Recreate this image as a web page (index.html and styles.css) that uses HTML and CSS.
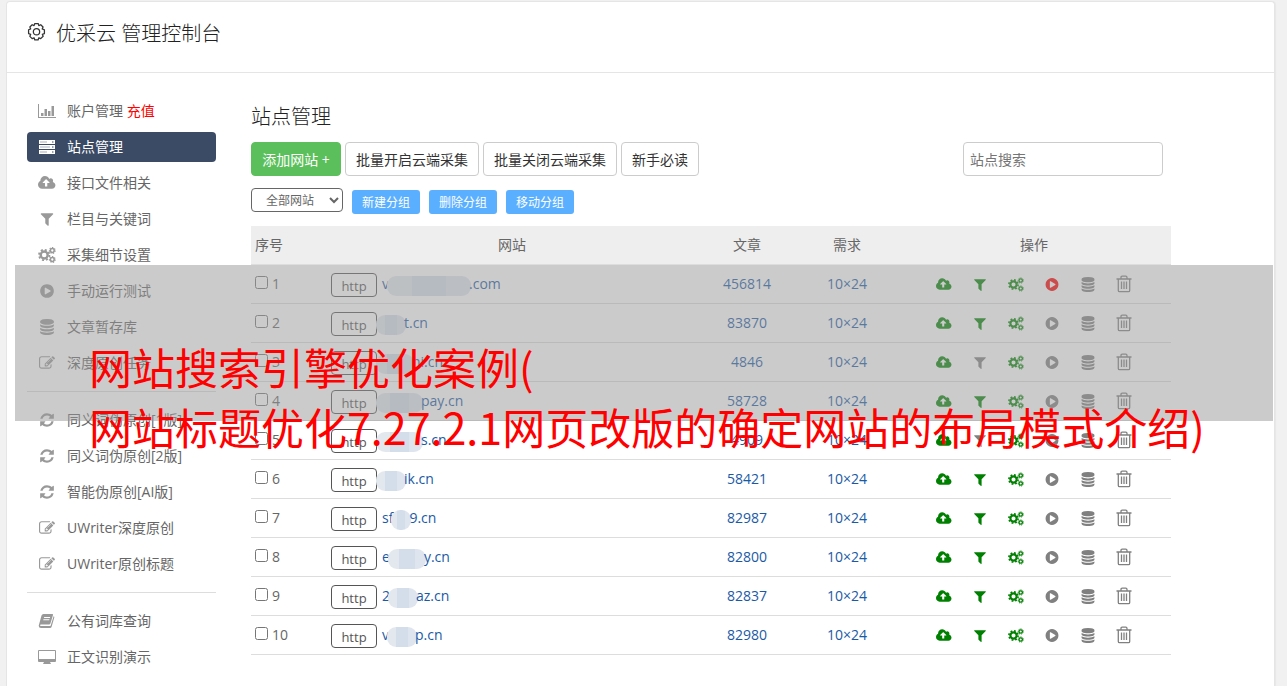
FILE: index.html
```html
<!DOCTYPE html>
<html lang="zh-CN">
<head>
  <meta charset="UTF-8">
  <title>优采云 管理控制台</title>
  <link rel="stylesheet" href="styles.css">
</head>
<body>

  <!-- icon set -->
  <svg class="sprite" aria-hidden="true">
    <symbol id="i-cog" viewBox="0 0 18 18"><path fill="none" stroke="currentColor" stroke-width="1.200" stroke-linejoin="round" d="M7.400 1h3.200l.6 1.900 1.800-.8 2.200 2.100-.8 1.900 2.100.8v3.600l-2 .7.8 1.900-2.300 2.200-1.800-.8-.7 2H7.400l-.7-2-1.800.8L2.700 13.100l.8-1.900-2-.7V6.900l2-.8-.8-1.900L4.900 2.100l1.800.8z"/><circle cx="9" cy="8.800" r="3" fill="none" stroke="currentColor" stroke-width="1.200"/></symbol>
    <symbol id="i-chart" viewBox="0 0 18 16"><path fill="currentColor" d="M0 1h1v13h17v1H0zM3 10h2.500v3H3zM6.500 6H9v7H6.500zM10 8h2.500v5H10zM13.500 3H16v10h-2.500z"/></symbol>
    <symbol id="i-server" viewBox="0 0 18 16"><path fill="currentColor" d="M1 1h16v4H1zM1 6h16v4H1zM1 11h16v4H1z"/><path fill="#3b4b66" fill-opacity=".45" d="M2 2.500h7v1H2zM2 7.500h10v1H2zM2 12.500h7v1H2z"/><path fill="#3b4b66" d="M14 2.500h1.500v1H14zM14 7.500h1.500v1H14zM14 12.500h1.500v1H14z"/></symbol>
    <symbol id="i-upload" viewBox="-64 64 1984 1664"><path fill="currentColor" d="M1216 864q0-14-9-23l-352-352q-9-9-23-9t-23 9l-351 351q-10 12-10 24 0 14 9 23t23 9h224v352q0 13 9.500 22.500t22.500 9.500h192q13 0 22.500-9.500t9.500-22.500v-352h224q13 0 22.500-9.500t9.500-22.500zm640 288q0 159-112.500 271.500t-271.500 112.500h-1088q-185 0-316.500-131.500t-131.500-316.500q0-130 70-240t188-165q-2-30-2-43 0-212 150-362t362-150q156 0 285.500 87t188.500 231q71-62 166-62 106 0 181 75t75 181q0 76-41 138 130 31 213.500 135.500t83.500 238.500z"/></symbol>
    <symbol id="i-filter" viewBox="0 0 1792 1792"><path fill="currentColor" d="M1595 295q17 41-14 70l-493 493v742q0 42-39 59-13 5-25 5-27 0-45-19l-256-256q-19-19-19-45v-486l-493-493q-31-29-14-70 17-39 59-39h1280q42 0 59 39z"/></symbol>
    <symbol id="i-cogs" viewBox="0 0 18 16"><g fill="none" stroke="currentColor"><circle cx="6.200" cy="8" r="3.500" stroke-width="2.400"/><circle cx="6.200" cy="8" r="5.200" stroke-width="1.800" stroke-dasharray="2.040 2.040"/><circle cx="14.300" cy="3.500" r="1.900" stroke-width="1.500"/><circle cx="14.300" cy="3.500" r="2.900" stroke-width="1.100" stroke-dasharray="1.300 1.300"/><circle cx="14.300" cy="12.500" r="1.900" stroke-width="1.500"/><circle cx="14.300" cy="12.500" r="2.900" stroke-width="1.100" stroke-dasharray="1.300 1.300"/></g></symbol>
    <symbol id="i-play" viewBox="0 0 1792 1792"><path fill="currentColor" d="M896 128q209 0 385.500 103t279.500 279.500 103 385.500-103 385.500-279.500 279.500-385.500 103-385.500-103-279.500-279.500-103-385.500 103-385.500 279.500-279.500 385.500-103zm384 823q32-18 32-55t-32-55l-544-320q-31-19-64-1-32 19-32 56v640q0 37 32 56 16 8 32 8 17 0 32-9z"/></symbol>
    <symbol id="i-database" viewBox="0 0 1792 1792"><path fill="currentColor" d="M896 768q237 0 443-43t325-127v170q0 69-103 128t-280 93.500-385 34.500-385-34.500-280-93.500-103-128v-170q119 84 325 127t443 43zm0 768q237 0 443-43t325-127v170q0 69-103 128t-280 93.500-385 34.500-385-34.500-280-93.500-103-128v-170q119 84 325 127t443 43zm0-384q237 0 443-43t325-127v170q0 69-103 128t-280 93.500-385 34.500-385-34.500-280-93.500-103-128v-170q119 84 325 127t443 43zm0-1152q208 0 385 34.500t280 93.500 103 128v128q0 69-103 128t-280 93.500-385 34.500-385-34.500-280-93.500-103-128v-128q0-69 103-128t280-93.500 385-34.500z"/></symbol>
    <symbol id="i-edit" viewBox="0 0 1792 1792"><path fill="currentColor" d="M888 1184l116-116-152-152-116 116v56h96v96h56zm440-720q-16-16-33 1l-350 350q-17 17-1 33t33-1l350-350q17-17 1-33zm80 594v190q0 119-84.500 203.500t-203.500 84.500h-832q-119 0-203.500-84.500t-84.500-203.500v-832q0-119 84.500-203.500t203.500-84.500h832q63 0 117 25 15 7 18 23 3 17-9 29l-49 49q-14 14-32 8-23-6-45-6h-832q-66 0-113 47t-47 113v832q0 66 47 113t113 47h832q66 0 113-47t47-113v-126q0-13 9-22l64-64q15-15 35-7t20 29zm-96-738l288 288-672 672h-288v-288zm444 132l-92 92-288-288 92-92q28-28 68-28t68 28l152 152q28 28 28 68t-28 68z"/></symbol>
    <symbol id="i-refresh" viewBox="0 0 1792 1792"><path fill="currentColor" d="M1639 1056q0 5-1 7-64 268-268 434.500t-478 166.500q-146 0-282.500-55t-243.500-157l-129 129q-19 19-45 19t-45-19-19-45v-448q0-26 19-45t45-19h448q26 0 45 19t19 45-19 45l-137 137q71 66 161 102t187 36q134 0 250-65t186-179q11-17 53-117 8-23 30-23h192q13 0 22.500 9.500t9.500 22.500zm25-800v448q0 26-19 45t-45 19h-448q-26 0-45-19t-19-45 19-45l138-138q-148-137-349-137-134 0-250 65t-186 179q-11 17-53 117-8 23-30 23h-199q-13 0-22.500-9.500t-9.500-22.500v-7q65-268 270-434.500t480-166.500q146 0 284 55.500t245 156.500l130-129q19-19 45-19t45 19 19 45z"/></symbol>
    <symbol id="i-book" viewBox="0 0 18 16"><path fill="currentColor" fill-rule="evenodd" d="M5.500 1h8.800q1 0 .7 1l-2.600 8.500q-.3 1-1.400 1H3q-1 0-1 .8t1 .8h8.800q.7 0 .9-.7l2.900-9.200q1 .4.700 1.300l-2.600 8.900q-.4 1.500-1.800 1.500H3q-2.200 0-2.300-2.200L3.500 2.500Q4 1 5.500 1zm.7 3-.3 1h6l.3-1zm-.7 2.300-.3 1h6l.3-1z"/></symbol>
    <symbol id="i-desktop" viewBox="0 0 18 16"><path fill="currentColor" fill-rule="evenodd" d="M1 1h16q1 0 1 1v10q0 1-1 1h-5l1 2H5l1-2H1q-1 0-1-1V2q0-1 1-1zm0 1v8h16V2z"/></symbol>
    <symbol id="i-trash" viewBox="0 0 16 18"><path fill="none" stroke="currentColor" stroke-width="1.300" d="M.5 4h15M5 4V2.500Q5 1.200 6.200 1.200h3.600Q11 1.200 11 2.500V4M2.300 4v11.500q0 1.200 1.200 1.200h9q1.200 0 1.200-1.200V4M5.500 6.500v7.500M8 6.500v7.500M10.500 6.500v7.500"/></symbol>
  </svg>

  <div class="panel">
    <header class="panel-head">
      <svg class="head-icon"><use href="#i-cog"/></svg>
      <h1>优采云 管理控制台</h1>
    </header>

    <div class="panel-body">
      <nav class="sidebar">
        <ul>
          <li><a href="#"><svg><use href="#i-chart"/></svg>账户管理 <em>充值</em></a></li>
          <li class="active"><a href="#"><svg><use href="#i-server"/></svg>站点管理</a></li>
          <li><a href="#"><svg><use href="#i-upload"/></svg>接口文件相关</a></li>
          <li><a href="#"><svg><use href="#i-filter"/></svg>栏目与关键词</a></li>
          <li><a href="#"><svg><use href="#i-cogs"/></svg>采集细节设置</a></li>
          <li><a href="#"><svg><use href="#i-play"/></svg>手动运行测试</a></li>
          <li><a href="#"><svg><use href="#i-database"/></svg>文章暂存库</a></li>
          <li><a href="#"><svg><use href="#i-edit"/></svg>深度原创任务</a></li>
        </ul>
        <ul>
          <li><a href="#"><svg><use href="#i-refresh"/></svg>同义词伪原创[1版]</a></li>
          <li><a href="#"><svg><use href="#i-refresh"/></svg>同义词伪原创[2版]</a></li>
          <li><a href="#"><svg><use href="#i-refresh"/></svg>智能伪原创[AI版]</a></li>
          <li><a href="#"><svg><use href="#i-edit"/></svg>UWriter深度原创</a></li>
          <li><a href="#"><svg><use href="#i-edit"/></svg>UWriter原创标题</a></li>
        </ul>
        <ul>
          <li><a href="#"><svg><use href="#i-book"/></svg>公有词库查询</a></li>
          <li><a href="#"><svg><use href="#i-desktop"/></svg>正文识别演示</a></li>
        </ul>
      </nav>

      <main>
        <h2>站点管理</h2>

        <div class="toolbar">
          <button type="button" class="btn btn-add">添加网站 +</button>
          <button type="button" class="btn">批量开启云端采集</button>
          <button type="button" class="btn">批量关闭云端采集</button>
          <button type="button" class="btn">新手必读</button>
          <input type="search" class="search" placeholder="站点搜索" aria-label="站点搜索">
        </div>

        <div class="groups">
          <select aria-label="分组">
            <option>全部网站</option>
          </select>
          <button type="button" class="btn-group">新建分组</button>
          <button type="button" class="btn-group">删除分组</button>
          <button type="button" class="btn-group">移动分组</button>
        </div>

        <table>
          <thead>
            <tr>
              <th class="col-no">序号</th>
              <th>网站</th>
              <th class="col-num">文章</th>
              <th class="col-num">需求</th>
              <th class="col-act">操作</th>
            </tr>
          </thead>
          <tbody>
            <tr>
              <td><label><input type="checkbox">1</label></td>
              <td><div class="site"><button type="button" class="http">http</button><a href="#">v<i class="mask w80"></i>.com</a></div></td>
              <td><a href="#">456814</a></td>
              <td><a href="#">10×24</a></td>
              <td><div class="acts"><svg class="on"><use href="#i-upload"/></svg><svg class="on"><use href="#i-filter"/></svg><svg class="on"><use href="#i-cogs"/></svg><svg class="run"><use href="#i-play"/></svg><svg><use href="#i-database"/></svg><svg class="trash"><use href="#i-trash"/></svg></div></td>
            </tr>
            <tr>
              <td><label><input type="checkbox">2</label></td>
              <td><div class="site"><button type="button" class="http">http</button><a href="#"><i class="mask lead w26"></i>t.cn</a></div></td>
              <td><a href="#">83870</a></td>
              <td><a href="#">10×24</a></td>
              <td><div class="acts"><svg class="on"><use href="#i-upload"/></svg><svg class="on"><use href="#i-filter"/></svg><svg class="on"><use href="#i-cogs"/></svg><svg><use href="#i-play"/></svg><svg><use href="#i-database"/></svg><svg class="trash"><use href="#i-trash"/></svg></div></td>
            </tr>
            <tr>
              <td><label><input type="checkbox">3</label></td>
              <td><div class="site"><button type="button" class="http">http</button><a href="#"><i class="mask lead w32"></i>ni.cn</a></div></td>
              <td><a href="#">4846</a></td>
              <td><a href="#">10×24</a></td>
              <td><div class="acts"><svg class="on"><use href="#i-upload"/></svg><svg><use href="#i-filter"/></svg><svg class="on"><use href="#i-cogs"/></svg><svg><use href="#i-play"/></svg><svg><use href="#i-database"/></svg><svg class="trash"><use href="#i-trash"/></svg></div></td>
            </tr>
            <tr>
              <td><label><input type="checkbox">4</label></td>
              <td><div class="site"><button type="button" class="http">http</button><a href="#"><i class="mask lead w38"></i>pay.cn</a></div></td>
              <td><a href="#">58728</a></td>
              <td><a href="#">10×24</a></td>
              <td><div class="acts"><svg class="on"><use href="#i-upload"/></svg><svg class="on"><use href="#i-filter"/></svg><svg class="on"><use href="#i-cogs"/></svg><svg><use href="#i-play"/></svg><svg><use href="#i-database"/></svg><svg class="trash"><use href="#i-trash"/></svg></div></td>
            </tr>
            <tr>
              <td><label><input type="checkbox">5</label></td>
              <td><div class="site"><button type="button" class="http">http</button><a href="#"><i class="mask lead w38"></i>s.cn</a></div></td>
              <td><a href="#">4909</a></td>
              <td><a href="#">10×24</a></td>
              <td><div class="acts"><svg class="on"><use href="#i-upload"/></svg><svg><use href="#i-filter"/></svg><svg class="on"><use href="#i-cogs"/></svg><svg><use href="#i-play"/></svg><svg><use href="#i-database"/></svg><svg class="trash"><use href="#i-trash"/></svg></div></td>
            </tr>
            <tr>
              <td><label><input type="checkbox">6</label></td>
              <td><div class="site"><button type="button" class="http">http</button><a href="#"><i class="mask lead w26"></i>ik.cn</a></div></td>
              <td><a href="#">58421</a></td>
              <td><a href="#">10×24</a></td>
              <td><div class="acts"><svg class="on"><use href="#i-upload"/></svg><svg class="on"><use href="#i-filter"/></svg><svg class="on"><use href="#i-cogs"/></svg><svg><use href="#i-play"/></svg><svg><use href="#i-database"/></svg><svg class="trash"><use href="#i-trash"/></svg></div></td>
            </tr>
            <tr>
              <td><label><input type="checkbox">7</label></td>
              <td><div class="site"><button type="button" class="http">http</button><a href="#">sf<i class="mask w16"></i>9.cn</a></div></td>
              <td><a href="#">82987</a></td>
              <td><a href="#">10×24</a></td>
              <td><div class="acts"><svg class="on"><use href="#i-upload"/></svg><svg class="on"><use href="#i-filter"/></svg><svg class="on"><use href="#i-cogs"/></svg><svg><use href="#i-play"/></svg><svg><use href="#i-database"/></svg><svg class="trash"><use href="#i-trash"/></svg></div></td>
            </tr>
            <tr>
              <td><label><input type="checkbox">8</label></td>
              <td><div class="site"><button type="button" class="http">http</button><a href="#">e<i class="mask w32"></i>y.cn</a></div></td>
              <td><a href="#">82800</a></td>
              <td><a href="#">10×24</a></td>
              <td><div class="acts"><svg class="on"><use href="#i-upload"/></svg><svg class="on"><use href="#i-filter"/></svg><svg class="on"><use href="#i-cogs"/></svg><svg><use href="#i-play"/></svg><svg><use href="#i-database"/></svg><svg class="trash"><use href="#i-trash"/></svg></div></td>
            </tr>
            <tr>
              <td><label><input type="checkbox">9</label></td>
              <td><div class="site"><button type="button" class="http">http</button><a href="#">2<i class="mask w26"></i>az.cn</a></div></td>
              <td><a href="#">82837</a></td>
              <td><a href="#">10×24</a></td>
              <td><div class="acts"><svg class="on"><use href="#i-upload"/></svg><svg class="on"><use href="#i-filter"/></svg><svg class="on"><use href="#i-cogs"/></svg><svg><use href="#i-play"/></svg><svg><use href="#i-database"/></svg><svg class="trash"><use href="#i-trash"/></svg></div></td>
            </tr>
            <tr>
              <td><label><input type="checkbox">10</label></td>
              <td><div class="site"><button type="button" class="http">http</button><a href="#">v<i class="mask w26"></i>p.cn</a></div></td>
              <td><a href="#">82980</a></td>
              <td><a href="#">10×24</a></td>
              <td><div class="acts"><svg class="on"><use href="#i-upload"/></svg><svg class="on"><use href="#i-filter"/></svg><svg class="on"><use href="#i-cogs"/></svg><svg><use href="#i-play"/></svg><svg><use href="#i-database"/></svg><svg class="trash"><use href="#i-trash"/></svg></div></td>
            </tr>
          </tbody>
        </table>
      </main>
    </div>
  </div>

  <!-- caption laid over the console -->
  <div class="caption">
    <p>网站搜索引擎优化案例(<br>网站标题优化7.27.2.1网页改版的确定网站的布局模式介绍)</p>
  </div>

</body>
</html>
```
FILE: styles.css
```css
:root {
  --text: #666;
  --dark: #333;
  --link: #1a5aa5;
  --line: #ddd;
  --font: "Open Sans", "Noto Sans CJK SC", sans-serif;
}
*, *::before, *::after {
  box-sizing: border-box;
  margin: 0;
  padding: 0;
}
body {
  position: relative;
  padding-top: 1px;
  background: #f1f1f1;
  color: var(--text);
  font-family: var(--font);
  font-size: 14px;
  line-height: 20px;
}
a {
  color: var(--link);
  text-decoration: none;
}
button, input, select {
  font-family: inherit;
}
.sprite {
  display: none;
}

.panel {
  min-height: calc(100vh - 1px);
  margin: 0 12px 0 6px;
  background: #fff;
  border: 1px solid #e5e5e5;
  border-bottom: none;
  border-radius: 4px 4px 0 0;
  box-shadow: 1px 0 1px rgba(0, 0, 0, .04);
}
.panel-head {
  display: flex;
  align-items: flex-start;
  gap: 10px;
  height: 71px;
  padding: 17px 20px 0;
  border-bottom: 1px solid #e5e5e5;
  color: var(--dark);
}
.panel-head h1 {
  color: #222;
  font-size: 20px;
  font-weight: 300;
  line-height: 30px;
}
.head-icon {
  width: 19px;
  height: 26px;
}
.panel-body {
  display: flex;
  gap: 35px;
  padding: 23px 103px 0 20px;
}

/* left menu */
.sidebar {
  flex: 0 0 189px;
}
.sidebar ul {
  list-style: none;
}
.sidebar ul + ul {
  margin-top: 13px;
  padding-top: 13px;
  border-top: 1px solid var(--line);
}
.sidebar li + li {
  margin-top: 6px;
}
.sidebar a {
  display: flex;
  align-items: center;
  height: 30px;
  padding: 0 11px;
  border-radius: 4px;
  color: var(--text);
  white-space: pre;
}
.sidebar svg {
  width: 18px;
  height: 16px;
  margin-right: 11px;
  color: #999;
}
.sidebar em {
  color: #f00;
  font-style: normal;
}
.sidebar .active a {
  background: #3b4b66;
  color: #fff;
}
.sidebar .active svg {
  color: #fff;
}

main {
  flex: 1;
  min-width: 0;
}
main h2 {
  margin: 6px 0 10px;
  color: #222;
  font-size: 20px;
  font-weight: 300;
  line-height: 30px;
}
.toolbar {
  display: flex;
  gap: 4px;
  margin-bottom: 12px;
  padding-right: 8px;
}
.btn {
  height: 34px;
  padding: 0 10px;
  background: #fff;
  border: 1px solid #ccc;
  border-radius: 4px;
  color: var(--dark);
  font-size: 14px;
}
.btn-add {
  width: 90px;
  padding: 0;
  background: #5bc05b;
  border-color: #5bc05b;
  color: #fff;
}
.search {
  width: 200px;
  height: 34px;
  margin-left: auto;
  padding: 0 6px;
  border: 1px solid #ccc;
  border-radius: 4px;
  font-size: 14px;
}
.search::placeholder {
  color: #757575;
}
.groups {
  display: flex;
  align-items: flex-start;
  gap: 9px;
  margin-bottom: 12px;
}
.groups select {
  width: 92px;
  height: 24px;
  padding-left: 10px;
  background: #fff;
  border: 1px solid #666;
  border-radius: 4px;
  color: var(--text);
  font-size: 12px;
}
.btn-group {
  height: 24px;
  margin-top: 2px;
  padding: 0 10px;
  background: #5aafff;
  border: none;
  border-radius: 3px;
  color: #fff;
  font-size: 12px;
}

/* site list */
table {
  width: 100%;
  border-spacing: 0;
  table-layout: fixed;
}
th, td {
  height: 39px;
  padding: 0 4px;
  border-bottom: 1px solid var(--line);
  font-weight: normal;
  text-align: center;
}
th {
  background: #eee;
}
th:first-child, td:first-child {
  text-align: left;
}
.col-no {
  width: 76px;
}
.col-num {
  width: 100px;
}
.col-act {
  width: 274px;
}
td label {
  display: flex;
  align-items: center;
  gap: 4px;
}
td input {
  width: 13px;
  height: 13px;
  margin-bottom: 3px;
}
.site {
  display: flex;
  align-items: center;
  gap: 5px;
}
.site a {
  display: flex;
  align-items: center;
}
.http {
  width: 46px;
  height: 24px;
  margin-top: 2px;
  padding-top: 1px;
  background: #fff;
  border: 1px solid #555;
  border-radius: 4px;
  color: #555;
  font-size: 13px;
}
/* hidden part of a domain */
.mask {
  height: 20px;
  margin: 4px -2px 0;
  background: linear-gradient(90deg, #e3e8ee 30%, #d3deea 30%, #d3deea 70%, #dfe5ee 70%);
  border-radius: 9px;
}
.mask.lead {
  margin-left: -6px;
}
.w16 { width: 20px; }
.w26 { width: 30px; }
.w32 { width: 38px; }
.w38 { width: 47px; }
.w80 { width: 84px; }
.acts {
  display: flex;
  align-items: center;
  justify-content: center;
  gap: 20px;
}
.acts svg {
  width: 16px;
  height: 15px;
  color: #808080;
}
.acts .on {
  color: #008000;
}
.acts .run {
  color: #f00;
}
.acts .trash {
  height: 18px;
}

.caption {
  position: absolute;
  top: 265px;
  left: 15px;
  right: 14px;
  height: 156px;
  padding: 71px 0 0 74px;
  background: rgba(152, 152, 152, .5);
  color: #f00;
  font-family: "Noto Sans CJK SC", sans-serif;
  font-size: 43px;
  line-height: 60px;
  white-space: nowrap;
}
```
